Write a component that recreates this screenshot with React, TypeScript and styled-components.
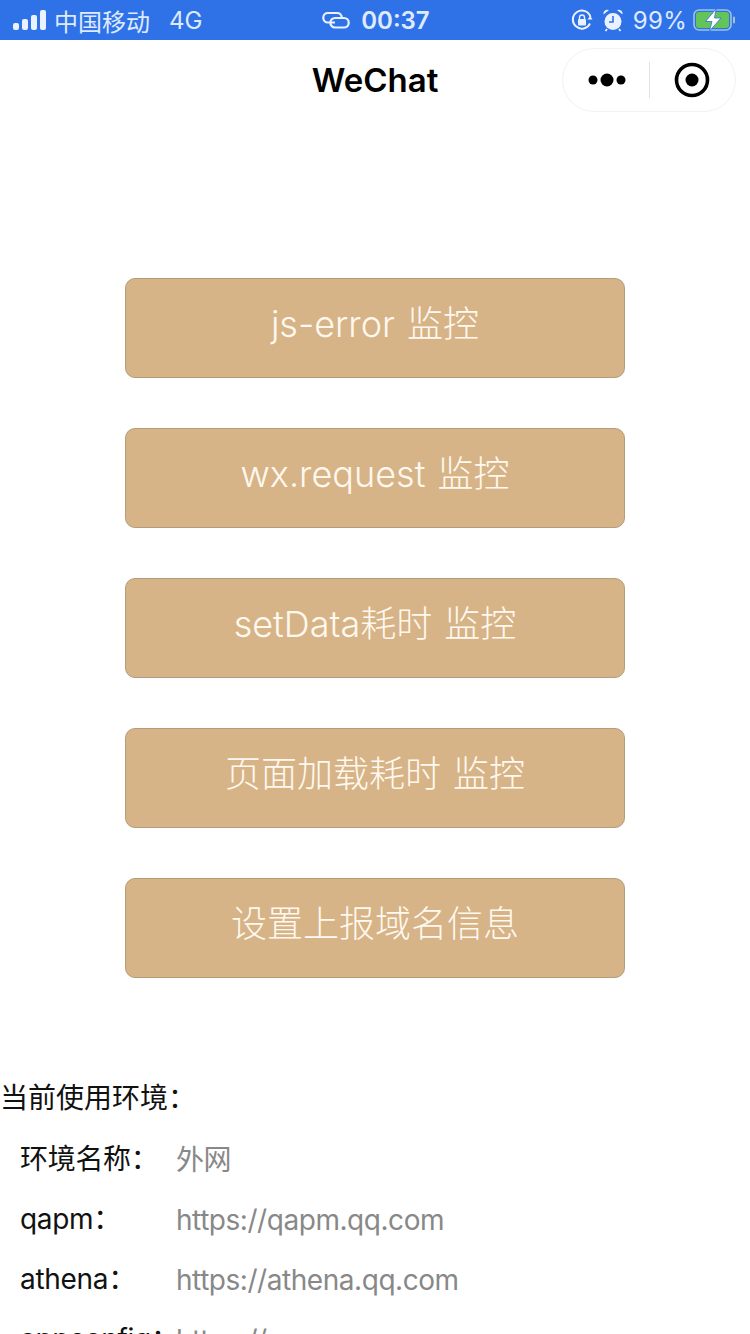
import React from "react";
import styled, { createGlobalStyle } from "styled-components";

const Global = createGlobalStyle`
  html, body { margin: 0; padding: 0; background: #fff; }
  body { font-family: Inter, "Noto Sans CJK SC", sans-serif; }
`;

const Page = styled.div`
  width: 750px;
  height: 1334px;
  overflow: hidden;
  display: flex;
  flex-direction: column;
  background: #fff;
`;

const StatusBar = styled.div`
  height: 40px;
  flex: none;
  background: #2f72e8;
  color: #dfeaff;
  display: grid;
  grid-template-columns: 1fr auto 1fr;
  align-items: center;
  padding: 0 14px 0 13px;
  font-size: 24px;
  font-weight: 400;
`;

const StatusLeft = styled.div`
  display: flex;
  align-items: center;
  gap: 7px;
`;

const Carrier = styled.span`
  letter-spacing: 0;
  margin-left: -1px;
`;

const Network = styled.span`
  margin-left: 12px;
  font-size: 24px;
`;

const StatusCenter = styled.div`
  display: flex;
  align-items: center;
  gap: 11px;
  font-weight: 600;
  font-size: 24px;
  letter-spacing: 0;
  margin-left: 3px;
`;

const StatusRight = styled.div`
  display: flex;
  align-items: center;
  justify-content: flex-end;
  gap: 9px;
`;

const Percent = styled.span`
  font-size: 24px;
  letter-spacing: 0.3px;
  margin-right: -3px;
`;

const NavBar = styled.div`
  height: 80px;
  flex: none;
  position: relative;
  display: flex;
  align-items: center;
  justify-content: center;
`;

const Title = styled.h1`
  margin: 0;
  font-size: 33px;
  font-weight: 600;
  color: #000;
`;

const Capsule = styled.div`
  position: absolute;
  left: 562px;
  top: 8px;
  width: 174px;
  height: 64px;
  box-sizing: border-box;
  border: 1px solid #f2f2f2;
  border-radius: 32px;
  display: grid;
  grid-template-columns: 1fr 1px 1fr;
  align-items: center;
  justify-items: center;
`;

const Separator = styled.div`
  width: 1px;
  height: 36px;
  background: #e2e2e2;
`;

const ButtonList = styled.div`
  display: flex;
  flex-direction: column;
  align-items: center;
  gap: 50px;
  padding-top: 158px;
`;

const ActionButton = styled.button`
  width: 500px;
  height: 100px;
  box-sizing: border-box;
  background: #d6b488;
  border: 1px solid #b59c7a;
  border-radius: 10px;
  color: #fff8ee;
  font-family: Inter, "Noto Sans CJK SC", sans-serif;
  font-size: 36px;
  font-weight: 300;
  word-spacing: 2px;
  padding: 0 0 14px;
`;

const EnvSection = styled.section`
  margin-top: 100px;
  font-size: 28px;
  color: #111;
`;

const EnvHeading = styled.div`
  height: 40px;
  line-height: 40px;
`;

const EnvRows = styled.div`
  display: flex;
  flex-direction: column;
  gap: 20px;
  margin-top: 21px;
  padding-left: 20px;
`;

const EnvRow = styled.div`
  display: grid;
  grid-template-columns: 156px 1fr;
  height: 40px;
  line-height: 40px;
  white-space: nowrap;
`;

const EnvLabel = styled.span`
  letter-spacing: -0.3px;
`;

const EnvValue = styled.span`
  color: #888888;
  letter-spacing: -0.45px;
  padding-top: 1px;
`;

const Signal = () => (
  <svg width="35" height="20" viewBox="0 0 35 20" fill="#eaf1ff">
    <rect x="0" y="13" width="6" height="7" rx="2" />
    <rect x="9" y="9" width="6" height="11" rx="2" />
    <rect x="18" y="5" width="6" height="15" rx="2" />
    <rect x="27" y="0" width="6" height="20" rx="2" />
  </svg>
);

const LinkIcon = () => (
  <svg width="28" height="17" viewBox="0 0 28 17" fill="none" stroke="#eaf1ff" strokeWidth="2.200">
    <path d="M13 10.500H6a4.750 4.750 0 0 1 0-9.500h9a4.750 4.750 0 0 1 4.750 4.750" />
    <path d="M8.500 10.500a4.500 4.500 0 0 1 4.500-4.500h9a4.750 4.750 0 0 1 0 9.500h-9a4.500 4.500 0 0 1-4.500-5" />
  </svg>
);

const RotationLock = () => (
  <svg width="22" height="22" viewBox="0 0 22 22" fill="none">
    <path d="M19 14.500A9 9 0 1 1 19.500 8" stroke="#eaf1ff" strokeWidth="2" />
    <path d="M21.500 10.500h-5l2.700-3.400z" fill="#eaf1ff" />
    <rect x="7" y="10" width="8" height="6.500" rx="1" fill="#eaf1ff" />
    <path d="M8.500 10V8.500a2.500 2.500 0 0 1 5 0V10" stroke="#eaf1ff" strokeWidth="1.400" />
  </svg>
);

const Alarm = () => (
  <svg width="22" height="24" viewBox="0 0 22 24" fill="none">
    <circle cx="11" cy="13.500" r="8.500" fill="#eaf1ff" />
    <path d="M1.500 6.500a4 4 0 0 1 5.500-4.500zM20.500 6.500a4 4 0 0 0-5.500-4.500z" fill="#eaf1ff" />
    <path d="M11 8v6H7" stroke="#2f72e8" strokeWidth="1.600" />
    <path d="M5 21l-1.500 2M17 21l1.500 2" stroke="#eaf1ff" strokeWidth="1.800" />
  </svg>
);

const Battery = () => (
  <svg width="43" height="22" viewBox="0 0 43 22">
    <rect x="1" y="1" width="37" height="20" rx="5" fill="none" stroke="#9fc3d8" strokeWidth="1.600" />
    <rect x="3" y="3" width="33" height="16" rx="3" fill="#63c45a" />
    <rect x="40" y="7.500" width="2" height="7" rx="1" fill="#9fc3d8" />
    <path d="M23 0L12.500 12.500H19L16.500 22L28 9H21.500z" fill="#fff" stroke="#2f72e8" strokeWidth="0.800" />
  </svg>
);

const DotsWrap = styled.span`
  display: flex;
  margin-left: 2px;
`;

const Dots = () => (
  <DotsWrap>
    <svg width="40" height="16" viewBox="0 0 40 16" fill="#000">
      <circle cx="6" cy="8" r="4.500" />
      <circle cx="20" cy="8" r="6.500" />
      <circle cx="34" cy="8" r="4.500" />
    </svg>
  </DotsWrap>
);

const Target = () => (
  <svg width="36" height="36" viewBox="0 0 36 36" fill="none">
    <circle cx="18" cy="18" r="15.500" stroke="#000" strokeWidth="3.600" />
    <circle cx="18" cy="18" r="6.500" fill="#000" />
  </svg>
);

const actions = [
  "js-error 监控",
  "wx.request 监控",
  "setData耗时 监控",
  "页面加载耗时 监控",
  "设置上报域名信息",
];

const envRows = [
  ["环境名称：", "外网"],
  ["qapm：", "https://qapm.qq.com"],
  ["athena：", "https://athena.qq.com"],
  ["appconfig：", "https://"],
];

export default function App() {
  return (
    <Page>
      <Global />
      <StatusBar>
        <StatusLeft>
          <Signal />
          <Carrier>中国移动</Carrier>
          <Network>4G</Network>
        </StatusLeft>
        <StatusCenter>
          <LinkIcon />
          <span>00:37</span>
        </StatusCenter>
        <StatusRight>
          <RotationLock />
          <Alarm />
          <Percent>99%</Percent>
          <Battery />
        </StatusRight>
      </StatusBar>
      <NavBar>
        <Title>WeChat</Title>
        <Capsule>
          <Dots />
          <Separator />
          <Target />
        </Capsule>
      </NavBar>
      <ButtonList>
        {actions.map((a) => (
          <ActionButton key={a}>{a}</ActionButton>
        ))}
      </ButtonList>
      <EnvSection>
        <EnvHeading>当前使用环境：</EnvHeading>
        <EnvRows>
          {envRows.map(([k, v]) => (
            <EnvRow key={k}>
              <EnvLabel>{k}</EnvLabel>
              <EnvValue>{v}</EnvValue>
            </EnvRow>
          ))}
        </EnvRows>
      </EnvSection>
    </Page>
  );
}
